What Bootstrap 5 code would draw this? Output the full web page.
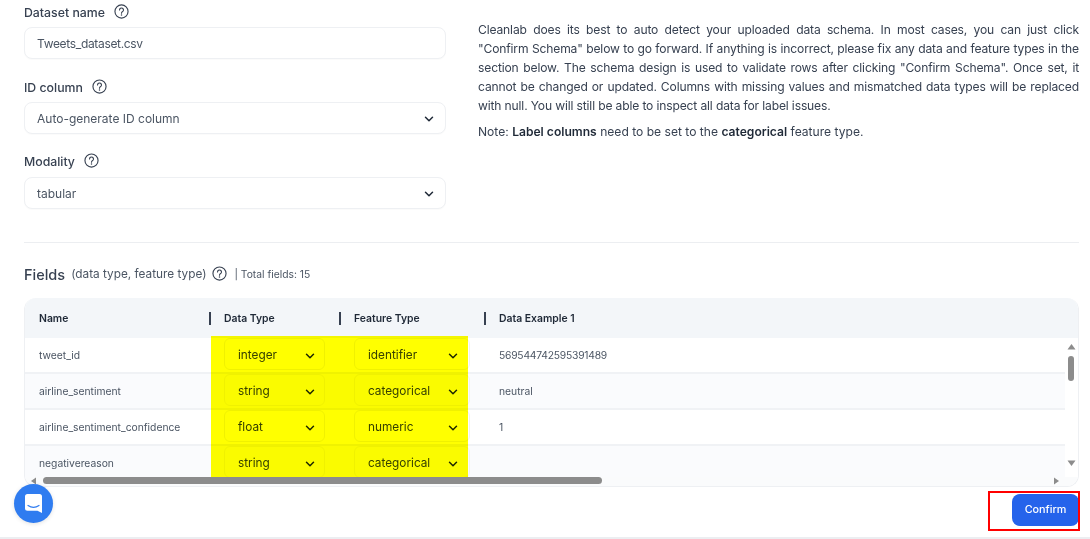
<!DOCTYPE html>
<html lang="en">
<head>
<meta charset="utf-8">
<title>Schema</title>
<link href="https://cdn.jsdelivr.net/npm/bootstrap@5.3.0/dist/css/bootstrap.min.css" rel="stylesheet">
<style>
html,body{height:539px;overflow:hidden;background:#fff}
body{font-family:Inter,"Liberation Sans",sans-serif;color:#374151;position:relative}
.page{width:1090px;height:539px;padding:0 11px 0 24px;border-bottom:2px solid #eceef1}
.top{height:243px;border-bottom:1px solid #eceef1}
.left{width:422px;padding-top:3px}
.lbl{font-size:12.3px;font-weight:500;color:#374151;height:20px;margin:0 0 4px;gap:9px;line-height:20px}
.lbl .q{margin-top:-4px}
.lbl2{margin-bottom:5px}
.fld{height:32px;border:1px solid #eef0f3;border-radius:8px;font-size:12px;color:#4b5563;padding:1px 11px 0 12px;background:#fff;box-shadow:0 1px 1px rgba(0,0,0,.02)}
.mbx{margin-bottom:19px}
.mby{margin-bottom:18px}
.nm{letter-spacing:-.33px}
.q{width:15px;height:15px;flex:none}
.para{width:601px;margin-left:32px;padding-top:20px;font-size:12.1px;line-height:19.1px;color:#374151}
.para p{margin:0 0 7px;text-align:justify}
.para .tight{letter-spacing:-.15px}
.para b{font-weight:600;color:#1f2937}
.head{height:55px;padding-top:8px;gap:6px;align-items:center}
.head .q{margin-top:-3px}
.head h6{font-size:14.5px;font-weight:500;margin:0;color:#374151}
.sub{font-size:11.8px;color:#4b5563}
.tot{font-size:10.3px;color:#4b5563;margin-left:1px}
.tw{width:1055px;height:189px;border:1px solid #eef0f3;border-top:0;border-radius:12px;overflow:hidden;background:#fff;position:relative}
.hd{height:40px;background:#f3f6f9;font-size:10.4px;font-weight:600;color:#1f2937}
.c1{width:184px;padding-left:14px;flex:none}
.c2{width:130px;flex:none;padding-left:15px}
.c3{width:145px;flex:none;padding-left:15px}
.c4{flex:1;padding-left:15px}
.hd .c1{line-height:13px}
.hd .c2,.hd .c3,.hd .c4{border-left:2px solid #374151;height:13px;line-height:13px;padding-left:13px}
.rw{height:36px;border-bottom:2px solid #f0f2f5;font-size:10.3px;color:#4b5563}
.rw.alt{background:#fafbfd}
.rows{height:139px;overflow:hidden;flex:1;min-width:0}
.ctxt{line-height:34px}
.digits{letter-spacing:-.22px}
.cell{height:32px;margin-bottom:2px;border:1px solid #f0f1f3;border-radius:6px;font-size:11.8px;color:#374151;padding:3px 9px 0 13px}
.sel2{width:101px}.sel3{width:116px;padding-right:11px}
.vs{width:13px;flex:none;background:#fff;position:relative}
.vthumb{width:6px;height:25px;background:#8c8c8c;border-radius:3px;margin:18px 0 0 3px}
.hs{height:10px;background:#fafbfc;padding:0 0 0 18px}
.hthumb{width:559px;height:7px;background:#8c8c8c;border-radius:4px}
.yl{position:absolute;left:186px;top:38px;width:257px;height:141px;background:#ffff00;mix-blend-mode:multiply;pointer-events:none}
.foot{height:50px;padding-top:7px}
.cfm{width:67px;height:32px;background:#2563eb;color:#fff;border:0;border-radius:8px;font-size:10.8px;font-weight:500;padding:0}
.redbox{position:absolute;left:988px;top:491px;width:92px;height:40px;border:2px solid #f00;pointer-events:none}
.chat{position:absolute;left:14px;top:484px;width:39px;height:39px;border-radius:50%;background:#2f7cf0;box-shadow:0 1px 4px rgba(0,0,0,.12)}
</style>
</head>
<body>
<svg width="0" height="0" class="d-none"><defs>
<symbol id="ques" viewBox="0 0 16 16"><circle cx="8" cy="8" r="7" fill="none" stroke="#374151" stroke-width="1.2"/><path d="M5.900 6.300a2.100 2.100 0 1 1 3.300 1.800c-.8.5-1.200.9-1.200 1.700" fill="none" stroke="#374151" stroke-width="1.200" stroke-linecap="round"/><circle cx="8" cy="11.700" r=".8" fill="#374151"/></symbol>
<symbol id="chev" viewBox="0 0 10 10"><path d="M1.500 3.300 5 6.800l3.500-3.500" fill="none" stroke="#1f2937" stroke-width="1.500" stroke-linecap="round" stroke-linejoin="round"/></symbol>
</defs></svg>
<div class="page">
  <div class="top d-flex">
    <div class="left">
      <div class="lbl d-flex align-items-center"><span>Dataset name</span><svg class="q"><use href="#ques"/></svg></div>
      <div class="fld mbx d-flex align-items-center"><span class="nm">Tweets_dataset.csv</span></div>
      <div class="lbl d-flex align-items-center"><span>ID column</span><svg class="q"><use href="#ques"/></svg></div>
      <div class="fld mby d-flex align-items-center justify-content-between">Auto-generate ID column<svg width="10" height="10"><use href="#chev"/></svg></div>
      <div class="lbl lbl2 d-flex align-items-center"><span>Modality</span><svg class="q"><use href="#ques"/></svg></div>
      <div class="fld d-flex align-items-center justify-content-between">tabular<svg width="10" height="10"><use href="#chev"/></svg></div>
    </div>
    <div class="para">
      <p class="tight">Cleanlab does its best to auto detect your uploaded data schema. In most cases, you can just click "Confirm Schema" below to go forward. If anything is incorrect, please fix any data and feature types in the section below. The schema design is used to validate rows after clicking "Confirm Schema". Once set, it cannot be changed or updated. Columns with missing values and mismatched data types will be replaced with null. You will still be able to inspect all data for label issues.</p>
      <p>Note: <b>Label columns</b> need to be set to the <b>categorical</b> feature type.</p>
    </div>
  </div>
  <div class="head d-flex">
    <h6>Fields</h6><span class="sub">(data type, feature type)</span><svg class="q"><use href="#ques"/></svg><span class="tot">| Total fields: 15</span>
  </div>
  <div class="tw">
    <div class="hd d-flex align-items-center"><div class="c1">Name</div><div class="c2">Data Type</div><div class="c3">Feature Type</div><div class="c4">Data Example 1</div></div>
    <div class="d-flex">
      <div class="rows">
        <div class="rw d-flex align-items-start"><div class="c1 ctxt">tweet_id</div><div class="c2"><div class="cell sel2 d-flex align-items-center justify-content-between">integer<svg width="10" height="10"><use href="#chev"/></svg></div></div><div class="c3"><div class="cell sel3 d-flex align-items-center justify-content-between">identifier<svg width="10" height="10"><use href="#chev"/></svg></div></div><div class="c4 ctxt digits">569544742595391489</div></div>
        <div class="rw alt d-flex align-items-start"><div class="c1 ctxt">airline_sentiment</div><div class="c2"><div class="cell sel2 d-flex align-items-center justify-content-between">string<svg width="10" height="10"><use href="#chev"/></svg></div></div><div class="c3"><div class="cell sel3 d-flex align-items-center justify-content-between">categorical<svg width="10" height="10"><use href="#chev"/></svg></div></div><div class="c4 ctxt">neutral</div></div>
        <div class="rw d-flex align-items-start"><div class="c1 ctxt">airline_sentiment_confidence</div><div class="c2"><div class="cell sel2 d-flex align-items-center justify-content-between">float<svg width="10" height="10"><use href="#chev"/></svg></div></div><div class="c3"><div class="cell sel3 d-flex align-items-center justify-content-between">numeric<svg width="10" height="10"><use href="#chev"/></svg></div></div><div class="c4 ctxt">1</div></div>
        <div class="rw alt d-flex align-items-start"><div class="c1 ctxt">negativereason</div><div class="c2"><div class="cell sel2 d-flex align-items-center justify-content-between">string<svg width="10" height="10"><use href="#chev"/></svg></div></div><div class="c3"><div class="cell sel3 d-flex align-items-center justify-content-between">categorical<svg width="10" height="10"><use href="#chev"/></svg></div></div><div class="c4 ctxt"></div></div>
      </div>
      <div class="vs"><svg width="13" height="139" class="d-block position-absolute top-0 start-0"><path d="M2.500 11.500 6.500 6l4 5.500z" fill="#8c8c8c"/><path d="M2.500 122.500h8l-4 5.500z" fill="#8c8c8c"/></svg><div class="vthumb"></div></div>
    </div>
    <div class="hs d-flex position-relative"><svg width="14" height="10" class="position-absolute top-0 start-0"><path d="M11 .5v7L6 4z" fill="#8c8c8c"/></svg><div class="hthumb"></div><svg width="10" height="10" class="position-absolute top-0 end-0 me-3"><path d="M2 .5v7L7 4z" fill="#8c8c8c"/></svg></div>
    <div class="yl"></div>
  </div>
  <div class="foot d-flex justify-content-end"><button class="btn cfm" type="button">Confirm</button></div>
</div>
<div class="redbox"></div>
<div class="chat d-flex align-items-center justify-content-center"><svg width="19" height="21" viewBox="0 0 19 21"><path d="M3.500 1h12A2.500 2.500 0 0 1 18 3.500V20l-4.500-2.300H3.500A2.500 2.500 0 0 1 1 15.200V3.500A2.500 2.500 0 0 1 3.500 1z" fill="#fff"/><path d="M4 12.500c3.300 2.200 7.700 2.200 11 0" fill="none" stroke="#2f7cf0" stroke-width="1.200" stroke-linecap="round"/></svg></div>
</body>
</html>
